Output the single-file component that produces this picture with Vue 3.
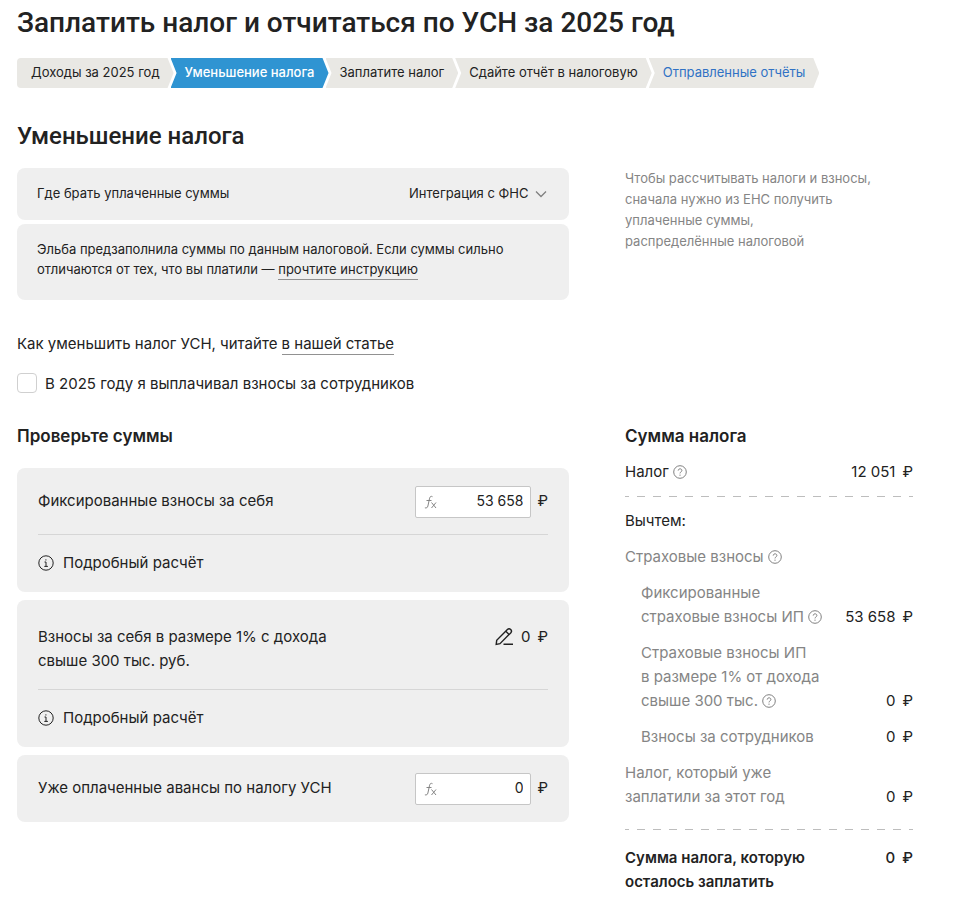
<script setup>
import { ref } from 'vue'

const steps = [
  { label: 'Доходы за 2025 год', state: 'plain' },
  { label: 'Уменьшение налога', state: 'current' },
  { label: 'Заплатите налог', state: 'plain' },
  { label: 'Сдайте отчёт в налоговую', state: 'plain' },
  { label: 'Отправленные отчёты', state: 'link' },
]

const source = ref('fns')
const hasEmployees = ref(false)
const fixed = ref('53 658')
const advances = ref('0')

const deductions = [
  { lines: ['Страховые взносы'], help: true },
  { lines: ['Фиксированные', 'страховые взносы ИП'], help: true, nested: true, value: '53 658' },
  { lines: ['Страховые взносы ИП', 'в размере 1% от дохода', 'свыше 300 тыс.'], help: true, nested: true, value: '0' },
  { lines: ['Взносы за сотрудников'], nested: true, value: '0' },
  { lines: ['Налог, который уже', 'заплатили за этот год'], value: '0' },
]
</script>

<template>
  <main class="page">
    <h1>Заплатить налог и отчитаться по УСН за 2025 год</h1>

    <nav class="steps" aria-label="Шаги">
      <a v-for="step in steps" :key="step.label" href="#" class="step" :class="step.state">{{ step.label }}</a>
    </nav>

    <h2>Уменьшение налога</h2>

    <div class="columns">
      <div class="source">
        <div class="card source-row">
          <label for="source">Где брать уплаченные суммы</label>
          <span class="select-wrap">
            <select id="source" v-model="source">
              <option value="fns">Интеграция с ФНС</option>
            </select>
            <svg class="chevron" viewBox="0 0 12 12" aria-hidden="true"><path d="M1 3.500 6 8.500 11 3.500" /></svg>
          </span>
        </div>
        <p class="card note">
          Эльба предзаполнила суммы по данным налоговой. Если суммы сильно<br />
          отличаются от тех, что вы платили — <a href="#">прочтите инструкцию</a>
        </p>
      </div>
      <p class="hint">
        Чтобы рассчитывать налоги и взносы,<br />
        сначала нужно из ЕНС получить<br />
        уплаченные суммы,<br />
        распределённые налоговой
      </p>
    </div>

    <p class="article">Как уменьшить налог УСН, читайте <a href="#">в нашей статье</a></p>

    <label class="check">
      <input v-model="hasEmployees" type="checkbox" />
      <span>В 2025 году я выплачивал взносы за сотрудников</span>
    </label>

    <div class="columns">
      <section>
        <h3>Проверьте суммы</h3>
        <div class="sums">
          <div class="card sum">
            <div class="sum-row">
              <label for="fixed">Фиксированные взносы за себя</label>
              <span class="amount">
                <span class="field">
                  <svg class="fx" viewBox="0 0 14 14" aria-hidden="true">
                    <path d="M8.500 1.700C7.200.900 6 1.500 5.600 3.200L3.900 11c-.4 1.700-1.500 2.300-3 1.800M2.500 5.500h5M7.500 7.500l4.500 5.500M12 7.500 7.500 13" />
                  </svg>
                  <input id="fixed" v-model="fixed" type="text" />
                </span>
                <span class="rub">₽</span>
              </span>
            </div>
            <button type="button" class="details">
              <svg class="info" viewBox="0 0 16 16" aria-hidden="true">
                <circle cx="8" cy="8" r="7.200" /><path d="M6.500 7H8v4.300M6.300 11.400h3.600M7.900 4.300v1.200" />
              </svg>
              Подробный расчёт
            </button>
          </div>

          <div class="card sum tall">
            <div class="sum-row">
              <span>Взносы за себя в размере 1% с дохода<br />свыше 300 тыс. руб.</span>
              <span class="amount">
                <button type="button" class="edit" aria-label="Изменить">
                  <svg viewBox="0 0 20 20" aria-hidden="true">
                    <path d="M2.200 17.400 2.700 13.300 13.400 2.600a2.300 2.300 0 0 1 3.300 3.300L6 16.700ZM11.800 4.200l3.300 3.300M9.500 17.300H19" />
                  </svg>
                </button>
                <span>0</span>
                <span class="rub">₽</span>
              </span>
            </div>
            <button type="button" class="details">
              <svg class="info" viewBox="0 0 16 16" aria-hidden="true">
                <circle cx="8" cy="8" r="7.200" /><path d="M6.500 7H8v4.300M6.300 11.400h3.600M7.900 4.300v1.200" />
              </svg>
              Подробный расчёт
            </button>
          </div>

          <div class="card sum">
            <div class="sum-row last">
              <label for="advances">Уже оплаченные авансы по налогу УСН</label>
              <span class="amount">
                <span class="field">
                  <svg class="fx" viewBox="0 0 14 14" aria-hidden="true">
                    <path d="M8.500 1.700C7.200.900 6 1.500 5.600 3.200L3.900 11c-.4 1.700-1.500 2.300-3 1.800M2.500 5.500h5M7.500 7.500l4.500 5.500M12 7.500 7.500 13" />
                  </svg>
                  <input id="advances" v-model="advances" type="text" />
                </span>
                <span class="rub">₽</span>
              </span>
            </div>
          </div>
        </div>
      </section>

      <section>
        <h3>Сумма налога</h3>
        <div class="line">
          <span>Налог<svg class="help" viewBox="0 0 14 14" aria-hidden="true">
              <circle cx="7" cy="7" r="6.300" /><path d="M5.200 5.600c0-2.400 3.700-2.300 3.700-.1C8.900 6.900 7 6.900 7 8.400M7 9.600v1.200" />
            </svg>
          </span>
          <span class="value">12 051<span>₽</span></span>
        </div>
        <hr />
        <p class="line">Вычтем:</p>
        <div v-for="row in deductions" :key="row.lines[0]" class="line muted" :class="{ nested: row.nested }">
          <span>
            <template v-for="(text, i) in row.lines" :key="text"><br v-if="i" />{{ text }}</template>
            <svg v-if="row.help" class="help" viewBox="0 0 14 14" aria-hidden="true">
              <circle cx="7" cy="7" r="6.300" /><path d="M5.200 5.600c0-2.400 3.700-2.300 3.700-.1C8.900 6.900 7 6.900 7 8.400M7 9.600v1.200" />
            </svg>
          </span>
          <span v-if="row.value" class="value">{{ row.value }}<span>₽</span></span>
        </div>
        <hr class="final" />
        <div class="line total">
          <span>Сумма налога, которую<br />осталось заплатить</span>
          <span class="value">0<span>₽</span></span>
        </div>
      </section>
    </div>
  </main>
</template>

<style>
body {
  margin: 0;
  background: #fff;
}
</style>

<style scoped>
.page {
  padding: 7px 41px 18px 17px;
  color: #222;
  font: 15px/24px Inter, "Liberation Sans", sans-serif;
}
h1, h2, h3, p {
  margin: 0;
}
h1, h2 {
  font-family: Roboto, Inter, sans-serif;
  font-weight: 500;
}
h1 {
  font-size: 28px;
  line-height: 32px;
}
h2 {
  margin: 34px 0 18px;
  font-size: 24px;
  line-height: 28px;
}
h3 {
  font-size: 17px;
  line-height: 24px;
  font-weight: 600;
}
.steps {
  display: flex;
  margin-top: 19px;
  font-size: 13px;
  line-height: 28px;
}
.step {
  padding: 0 14px 2px;
  background: #e9e8e4;
  color: #222;
  text-decoration: none;
  white-space: nowrap;
  clip-path: polygon(0 0, calc(100% - 6px) 0, 100% 50%, calc(100% - 6px) 100%, 0 100%, 6px 50%);
}
.step + .step {
  margin-left: -3px;
}
.step:first-child {
  border-radius: 4px 0 0 4px;
  clip-path: polygon(0 0, calc(100% - 6px) 0, 100% 50%, calc(100% - 6px) 100%, 0 100%);
}
.step.current {
  background: #2f94d2;
  color: #fff;
  font-weight: 500;
}
.step.link {
  color: #3072c4;
}
.columns {
  display: grid;
  grid-template-columns: minmax(0, 1fr) 288px;
  gap: 56px;
}
.card {
  border-radius: 8px;
  background: #efefef;
}
.source {
  display: grid;
  gap: 4px;
  font-size: 13px;
  line-height: 20px;
}
.source-row {
  display: flex;
  justify-content: space-between;
  padding: 15px 20px 17px;
}
.note {
  padding: 15px 20px 21px;
}
.note a, .article a {
  padding-bottom: 1px;
  color: inherit;
  text-decoration: none;
  border-bottom: 1px solid #919191;
}
.note a {
  padding-bottom: 2px;
}
.select-wrap {
  position: relative;
}
select {
  appearance: none;
  display: block;
  height: 20px;
  padding: 0 20px 0 0;
  border: 0;
  background: none;
  color: inherit;
  font: inherit;
}
svg {
  fill: none;
  stroke: currentColor;
}
.chevron {
  position: absolute;
  top: 5px;
  right: 2px;
  width: 12px;
  height: 12px;
  color: #808080;
  stroke-width: 1.3;
  pointer-events: none;
}
.hint {
  color: #858585;
  font-size: 13px;
  line-height: 21px;
}
.article {
  margin-top: 32px;
}
.check {
  display: flex;
  align-items: flex-start;
  gap: 8px;
  margin: 16px 0 28px;
}
.check input {
  appearance: none;
  box-sizing: border-box;
  width: 20px;
  height: 20px;
  margin: 1px 0 0;
  border: 1px solid #d0d0d0;
  border-radius: 4px;
  background: #fff;
}
.check input:checked {
  background: #2f94d2;
}
.sums {
  display: grid;
  gap: 8px;
  margin-top: 20px;
}
.sum {
  padding: 18px 21px 17px;
}
.sum.tall {
  padding-top: 25px;
}
.sum-row {
  display: flex;
  justify-content: space-between;
  align-items: center;
  padding-bottom: 16px;
  border-bottom: 1px solid #d6d6d6;
}
.sum-row label, .field + .rub {
  padding-bottom: 2px;
}
.tall .sum-row {
  align-items: flex-start;
}
.sum-row.last {
  padding: 0;
  border: 0;
}
.amount {
  display: flex;
  align-items: center;
  gap: 6px;
}
.tall .amount {
  gap: 7px;
}
.field {
  display: flex;
  align-items: center;
  box-sizing: border-box;
  width: 116px;
  height: 32px;
  padding: 0 7px 0 8px;
  border: 1px solid #c6c6c6;
  border-radius: 2px;
  background: #fff;
}
.field input {
  flex: 1;
  min-width: 0;
  padding: 0 0 2px;
  border: 0;
  outline: 0;
  background: none;
  color: inherit;
  font: 14px/24px Inter, sans-serif;
  text-align: right;
}
.fx {
  flex: none;
  width: 14px;
  height: 14px;
  color: #858585;
}
button {
  padding: 0;
  border: 0;
  background: none;
  color: inherit;
  font: inherit;
}
.details {
  display: flex;
  align-items: center;
  gap: 9px;
  margin-top: 16px;
}
.info {
  width: 16px;
  height: 16px;
}
.edit {
  display: flex;
}
.edit svg {
  width: 20px;
  height: 20px;
  stroke-width: 1.4;
}
.line {
  display: flex;
  justify-content: space-between;
  align-items: flex-end;
  margin-top: 12px;
}
.muted {
  color: #858585;
}
.nested {
  padding-left: 16px;
}
.help {
  width: 14px;
  height: 14px;
  margin-left: 4px;
  color: #808080;
  vertical-align: -2px;
}
.value {
  display: flex;
  gap: 7px;
  color: #222;
}
hr {
  height: 1px;
  margin: 12px 0;
  border: 0;
  background: repeating-linear-gradient(90deg, #bdbdbd 0 4px, transparent 4px 12px, #bdbdbd 12px 16px);
}
hr.final {
  margin: 20px 0 16px;
}
.total {
  align-items: flex-start;
  margin-top: 0;
  font-weight: 600;
}
.total .value {
  font-weight: 500;
}
</style>
